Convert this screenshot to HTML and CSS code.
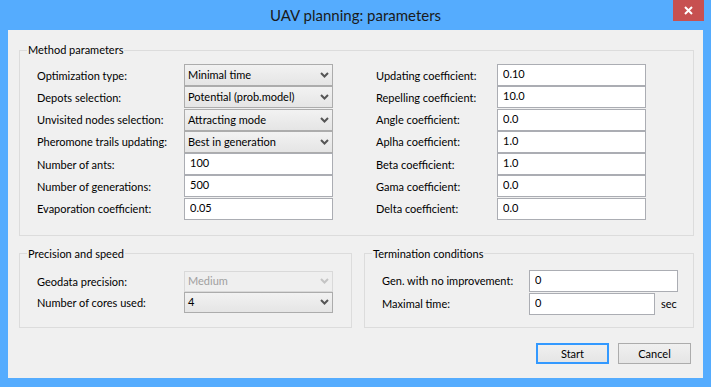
FILE: index.html
```html
<!DOCTYPE html>
<html lang="en">
<head>
    <meta charset="UTF-8">
    <title>UAV planning: parameters</title>
    <link rel="stylesheet" href="styles.css">
</head>
<body>

<div class="window">
    <div class="titlebar">
        <span class="title">UAV planning: parameters</span>
        <button class="close-btn" type="button">
            <svg width="9" height="9" viewBox="0 0 9 9">
                <path d="M1 1 L8 8 M8 1 L1 8" stroke="#fff" stroke-width="2"/>
            </svg>
        </button>
    </div>

    <div class="client">
        <fieldset class="group group-method">
            <legend>Method parameters</legend>
            <div class="method-cols">
                <div class="form-col">
                    <label>Optimization type:</label>
                    <div class="combo"><span>Minimal time</span><svg class="chevron" width="9" height="6" viewBox="0 0 9 6"><path d="M1 1 L4.5 4.5 L8 1" fill="none" stroke="#555" stroke-width="2"/></svg></div>
                    <label>Depots selection:</label>
                    <div class="combo"><span>Potential (prob.model)</span><svg class="chevron" width="9" height="6" viewBox="0 0 9 6"><path d="M1 1 L4.5 4.5 L8 1" fill="none" stroke="#555" stroke-width="2"/></svg></div>
                    <label>Unvisited nodes selection:</label>
                    <div class="combo"><span>Attracting mode</span><svg class="chevron" width="9" height="6" viewBox="0 0 9 6"><path d="M1 1 L4.5 4.5 L8 1" fill="none" stroke="#555" stroke-width="2"/></svg></div>
                    <label>Pheromone trails updating:</label>
                    <div class="combo"><span>Best in generation</span><svg class="chevron" width="9" height="6" viewBox="0 0 9 6"><path d="M1 1 L4.5 4.5 L8 1" fill="none" stroke="#555" stroke-width="2"/></svg></div>
                    <label>Number of ants:</label>
                    <input type="text" class="field" value="100">
                    <label>Number of generations:</label>
                    <input type="text" class="field" value="500">
                    <label>Evaporation coefficient:</label>
                    <input type="text" class="field" value="0.05">
                </div>
                <div class="form-col form-col-right">
                    <label>Updating coefficient:</label>
                    <input type="text" class="field" value="0.10">
                    <label>Repelling coefficient:</label>
                    <input type="text" class="field" value="10.0">
                    <label>Angle coefficient:</label>
                    <input type="text" class="field" value="0.0">
                    <label>Aplha coefficient:</label>
                    <input type="text" class="field" value="1.0">
                    <label>Beta coefficient:</label>
                    <input type="text" class="field" value="1.0">
                    <label>Gama coefficient:</label>
                    <input type="text" class="field" value="0.0">
                    <label>Delta coefficient:</label>
                    <input type="text" class="field" value="0.0">
                </div>
            </div>
        </fieldset>

        <div class="lower">
            <fieldset class="group group-precision">
                <legend>Precision and speed</legend>
                <div class="form-col form-col-small">
                    <label>Geodata precision:</label>
                    <div class="combo combo-disabled"><span>Medium</span><svg class="chevron" width="9" height="6" viewBox="0 0 9 6"><path d="M1 1 L4.5 4.5 L8 1" fill="none" stroke="#c4c4c4" stroke-width="2"/></svg></div>
                    <label>Number of cores used:</label>
                    <div class="combo"><span>4</span><svg class="chevron" width="9" height="6" viewBox="0 0 9 6"><path d="M1 1 L4.5 4.5 L8 1" fill="none" stroke="#555" stroke-width="2"/></svg></div>
                </div>
            </fieldset>
            <fieldset class="group group-term">
                <legend>Termination conditions</legend>
                <div class="form-col form-col-term">
                    <label>Gen. with no improvement:</label>
                    <input type="text" class="field" value="0">
                    <label>Maximal time:</label>
                    <div class="field-unit">
                        <input type="text" class="field field-short" value="0">
                        <span class="unit">sec</span>
                    </div>
                </div>
            </fieldset>
        </div>

        <div class="buttons">
            <button class="btn btn-default" type="button">Start</button>
            <button class="btn" type="button">Cancel</button>
        </div>
    </div>
</div>

</body>
</html>
```

FILE: styles.css
```css
body {
    margin: 0;
    font-family: 'Lato', 'Liberation Sans', sans-serif;
    font-size: 11px;
    color: #000;
}
.window {
    position: relative;
    width: 711px;
    height: 387px;
    box-sizing: border-box;
    padding: 0 8px 9px 8px;
    background-color: #55acfe;
    display: flex;
    flex-direction: column;
}
.titlebar {
    height: 30px;
    flex-shrink: 0;
    display: flex;
    justify-content: center;
    align-items: center;
}
.title {
    font-size: 15px;
    color: #1a1a1a;
    padding-bottom: 1px;
}
.close-btn {
    position: absolute;
    top: 0;
    right: 7px;
    width: 31px;
    height: 21px;
    border: none;
    padding: 0;
    background-color: #c75050;
    display: flex;
    justify-content: center;
    align-items: center;
}
.client {
    flex: 1;
    background-color: #f0f0f0;
    display: flex;
    flex-direction: column;
}
.group {
    margin: 0;
    padding: 0;
    min-width: 0;
    border: 1px solid #dcdcdc;
}
.group legend {
    margin-left: 7px;
    padding: 0 1px;
    line-height: 16px;
}
.group-method {
    margin: 12px 9px 0 11px;
}
.method-cols {
    display: flex;
    gap: 43px;
    padding: 6px 0 15px 17px;
}
.form-col {
    display: grid;
    grid-template-columns: 147px 149px;
    grid-auto-rows: 22px;
    row-gap: 0.3px;
}
.form-col-right {
    grid-template-columns: 121px 149px;
}
.form-col label {
    align-self: center;
    white-space: nowrap;
}
.combo {
    box-sizing: border-box;
    border: 1px solid #acacac;
    background: linear-gradient(#f2f2f2, #e5e5e5);
    display: flex;
    align-items: center;
    justify-content: space-between;
    padding: 0 3px 0 3px;
}
.combo span {
    padding-bottom: 1px;
}
.combo-disabled {
    border-color: #d9d9d9;
    background: #efefef;
    color: #a0a0a0;
}
.field {
    box-sizing: border-box;
    width: 149px;
    height: 22px;
    margin: 0;
    border: 1px solid #abadb3;
    background-color: #fff;
    font: inherit;
    color: #000;
    padding: 0 5px 3px 5px;
    outline: none;
}
.lower {
    display: flex;
    gap: 12px;
    margin: 10px 9px 0 11px;
}
.group-precision {
    width: 333px;
    box-sizing: border-box;
}
.group-precision .form-col-small {
    grid-auto-rows: 21px;
    row-gap: 0;
    padding: 9px 0 14px 17px;
}
.group-term {
    flex: 1;
}
.form-col-term {
    row-gap: 1px;
    padding: 8px 0 12px 17px;
}
.field-unit {
    display: flex;
    align-items: center;
}
.field-short {
    width: 126px;
}
.unit {
    margin-left: 6px;
}
.buttons {
    display: flex;
    justify-content: flex-end;
    gap: 9px;
    margin: 15px 12px 0 0;
}
.btn {
    width: 73px;
    height: 21px;
    box-sizing: border-box;
    border: 1px solid #acacac;
    background: linear-gradient(#f0f0f0, #e5e5e5);
    font: inherit;
    color: #000;
    padding: 0;
}
.btn-default {
    border-color: #3399ff;
    box-shadow: inset 0 0 0 1px #3399ff;
}
```
